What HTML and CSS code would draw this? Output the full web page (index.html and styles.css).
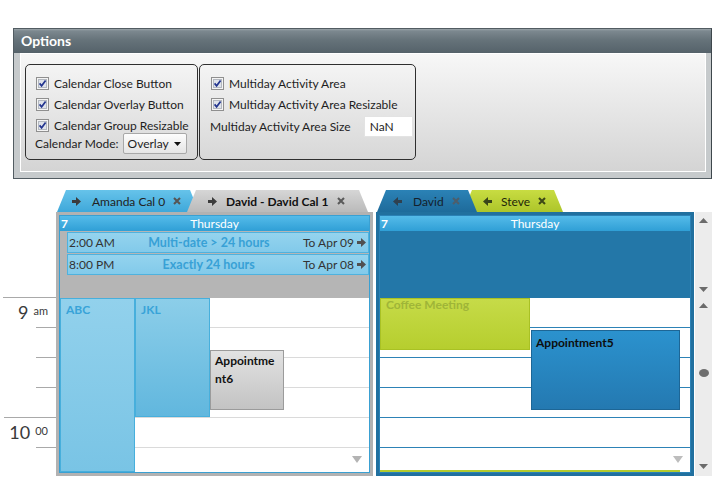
FILE: index.html
```html
<!DOCTYPE html>
<html>
<head>
<meta charset="utf-8">
<link rel="stylesheet" href="styles.css">
</head>
<body>
<div class="options">
  <div class="opt-head">Options</div>
  <div class="opt-body">
    <div class="opt-inner">
      <div class="group g1">
        <div class="row"><svg class="cb" viewBox="0 0 13 13"><rect x=".5" y=".5" width="12" height="12" fill="#f4f4f4" stroke="#8f8f8f"/><rect x="2.5" y="2.5" width="8" height="8" fill="#dfe3ea" stroke="#b3b8c0"/><path d="M3.6 6.4 5.6 8.8 9.6 3.4" fill="none" stroke="#23358f" stroke-width="1.7"/></svg>Calendar Close Button</div>
        <div class="row"><svg class="cb" viewBox="0 0 13 13"><rect x=".5" y=".5" width="12" height="12" fill="#f4f4f4" stroke="#8f8f8f"/><rect x="2.5" y="2.5" width="8" height="8" fill="#dfe3ea" stroke="#b3b8c0"/><path d="M3.6 6.4 5.6 8.8 9.6 3.4" fill="none" stroke="#23358f" stroke-width="1.7"/></svg>Calendar Overlay Button</div>
        <div class="row"><svg class="cb" viewBox="0 0 13 13"><rect x=".5" y=".5" width="12" height="12" fill="#f4f4f4" stroke="#8f8f8f"/><rect x="2.5" y="2.5" width="8" height="8" fill="#dfe3ea" stroke="#b3b8c0"/><path d="M3.6 6.4 5.6 8.8 9.6 3.4" fill="none" stroke="#23358f" stroke-width="1.7"/></svg>Calendar Group Resizable</div>
        <div class="row mode">Calendar Mode:<div class="select">Overlay<svg width="7" height="4" viewBox="0 0 7 4"><path d="M0 0H7L3.5 4Z" fill="#111"/></svg></div></div>
      </div>
      <div class="group g2">
        <div class="row"><svg class="cb" viewBox="0 0 13 13"><rect x=".5" y=".5" width="12" height="12" fill="#f4f4f4" stroke="#8f8f8f"/><rect x="2.5" y="2.5" width="8" height="8" fill="#dfe3ea" stroke="#b3b8c0"/><path d="M3.6 6.4 5.6 8.8 9.6 3.4" fill="none" stroke="#23358f" stroke-width="1.7"/></svg>Multiday Activity Area</div>
        <div class="row"><svg class="cb" viewBox="0 0 13 13"><rect x=".5" y=".5" width="12" height="12" fill="#f4f4f4" stroke="#8f8f8f"/><rect x="2.5" y="2.5" width="8" height="8" fill="#dfe3ea" stroke="#b3b8c0"/><path d="M3.6 6.4 5.6 8.8 9.6 3.4" fill="none" stroke="#23358f" stroke-width="1.7"/></svg>Multiday Activity Area Resizable</div>
        <div class="row size">Multiday Activity Area Size<div class="input">NaN</div></div>
      </div>
    </div>
  </div>
</div>

<div class="sched">
  <div class="gutter">
    <div class="hour">
      <div class="q"><div class="hlabel"><span class="hnum">9</span><span class="hsup">am</span></div></div>
      <div class="q"></div>
      <div class="q"></div>
      <div class="q last"></div>
    </div>
    <div class="hour h10">
      <div class="q"><div class="hlabel"><span class="hnum">10</span><span class="hsup">00</span></div></div>
      <div class="q"></div>
    </div>
  </div>

  <div class="calcol lcol">
    <div class="tabs">
      <div class="tab t-amanda">
        <svg class="arr" viewBox="0 0 9 9"><path d="M0 3H4V0L9 4.5 4 9V6H0Z" fill="#3c3c3c"/></svg>
        <span class="tl">Amanda Cal 0</span>
        <svg class="x" viewBox="0 0 8 8"><path d="M1 1 7 7M7 1 1 7" stroke="#555" stroke-width="2.1"/></svg>
      </div>
      <div class="tab t-david">
        <svg class="arr" viewBox="0 0 9 9"><path d="M0 3H4V0L9 4.5 4 9V6H0Z" fill="#3c3c3c"/></svg>
        <span class="tl b">David - David Cal 1</span>
        <svg class="x" viewBox="0 0 8 8"><path d="M1 1 7 7M7 1 1 7" stroke="#5a5a5a" stroke-width="2.1"/></svg>
      </div>
    </div>
    <div class="cal">
      <div class="cal-in">
        <div class="chead"><b class="dnum">7</b><span>Thursday</span><span></span></div>
        <div class="mday">
          <div class="bar"><span>2:00 AM</span><span class="mid">Multi-date &gt; 24 hours</span><span class="to">To Apr 09<svg class="arr" viewBox="0 0 9 9"><path d="M0 3H4V0L9 4.5 4 9V6H0Z" fill="#505050"/></svg></span></div>
          <div class="bar"><span>8:00 PM</span><span class="mid">Exactly 24 hours</span><span class="to">To Apr 08<svg class="arr" viewBox="0 0 9 9"><path d="M0 3H4V0L9 4.5 4 9V6H0Z" fill="#505050"/></svg></span></div>
        </div>
        <div class="tarea">
          <div class="slot"></div><div class="slot"></div><div class="slot"></div><div class="slot"></div><div class="slot"></div>
          <div class="ev abc">ABC</div>
          <div class="ev jkl">JKL</div>
          <div class="ev ap6">Appointment6</div>
          <svg class="more" viewBox="0 0 10 7"><path d="M0 0H10L5 7Z" fill="#b3b3b3"/></svg>
        </div>
      </div>
    </div>
  </div>

  <div class="calcol rcol">
    <div class="tabs">
      <div class="tab t-rdavid">
        <svg class="arr" viewBox="0 0 9 9"><path d="M9 3H5V0L0 4.5 5 9V6H9Z" fill="#2f4150"/></svg>
        <span class="tl">David</span>
        <svg class="x" viewBox="0 0 8 8"><path d="M1 1 7 7M7 1 1 7" stroke="#4d5e6b" stroke-width="2.1"/></svg>
      </div>
      <div class="tab t-steve">
        <svg class="arr" viewBox="0 0 9 9"><path d="M9 3H5V0L0 4.5 5 9V6H9Z" fill="#39441a"/></svg>
        <span class="tl">Steve</span>
        <svg class="x" viewBox="0 0 8 8"><path d="M1 1 7 7M7 1 1 7" stroke="#3d4816" stroke-width="2.1"/></svg>
      </div>
    </div>
    <div class="cal rcal">
      <div class="cal-in">
        <div class="chead"><b class="dnum">7</b><span>Thursday</span><span></span></div>
        <div class="mday rm"></div>
        <div class="tarea">
          <div class="slot"></div><div class="slot"></div><div class="slot"></div><div class="slot"></div><div class="slot"></div>
          <div class="ev coffee"><div class="ctext">Coffee Meeting</div></div>
          <div class="ev ap5">Appointment5</div>
          <div class="ev gline"></div>
          <svg class="more" viewBox="0 0 10 7"><path d="M0 0H10L5 7Z" fill="#bdbdbd"/></svg>
        </div>
      </div>
    </div>
  </div>

  <div class="scroll">
    <div class="sb top">
      <svg viewBox="0 0 9 5"><path d="M0 5 4.5 0 9 5Z" fill="#6b6b6b"/></svg>
      <svg viewBox="0 0 9 5"><path d="M0 0H9L4.5 5Z" fill="#6b6b6b"/></svg>
    </div>
    <div class="sb bot">
      <svg viewBox="0 0 9 5"><path d="M0 5 4.5 0 9 5Z" fill="#6b6b6b"/></svg>
      <span class="thumb"></span>
      <svg class="dn" viewBox="0 0 9 5"><path d="M0 0H9L4.5 5Z" fill="#6b6b6b"/></svg>
    </div>
  </div>
</div>
</body>
</html>
```

FILE: styles.css
```css
* { box-sizing: border-box; }
body { margin: 0; font-family: Lato, "Open Sans", sans-serif; font-size: 12px; color: #222; background: #fff; }

/* options panel */
.options { margin: 28px 0 0 13px; width: 699px; height: 151px; border: 1px solid #525c62; border-right-color: #3e474c; background: #c6cacc; display: flex; flex-direction: column; }
.opt-head { height: 24px; flex: none; background: linear-gradient(#9aa4a9 0, #7c888f 2px, #66737a 45%, #55626a 100%); color: #fff; font-weight: 700; font-size: 14px; line-height: 24px; padding-left: 7px; }
.opt-body { flex: 1; padding: 0 5px 6px 6px; }
.opt-inner { height: 100%; border: 1px solid #fff; background: linear-gradient(#f7f7f7, #d4d4d4); padding: 10px 0 0 4px; display: flex; align-items: flex-start; }
.group { height: 96px; border: 1px solid #2f2f2f; border-radius: 5px; padding-top: 8px; }
.g1 { width: 173px; padding-left: 10px; }
.g2 { width: 217px; margin-left: 1px; padding-left: 11px; }
.row { height: 21px; display: flex; align-items: center; white-space: nowrap; color: #1e1e1e; }
.cb { width: 13px; height: 13px; margin-right: 5px; flex: none; display: block; }
.mode { margin-top: -3px; margin-left: -1px; }
.select { margin-left: 4px; width: 64px; height: 21px; border: 1px solid #a8a8a8; border-radius: 2px; background: linear-gradient(#fdfdfd, #e5e5e5); display: flex; align-items: center; padding-left: 4px; }
.select svg { margin-left: auto; margin-right: 5px; }
.size { margin-top: 1px; margin-left: -1px; }
.input { margin-left: 13px; width: 49px; height: 21px; background: #fff; border: 1px solid #e3e3e3; padding-left: 5px; line-height: 19px; }

/* scheduler */
.sched { display: flex; margin-top: 11px; height: 286px; overflow: hidden; }
.gutter { width: 56px; flex: none; padding-top: 107px; color: #3a3a3a; }
.hour { margin-left: 3px; border-top: 1px solid #a9a9a9; height: 120px; }
.h10 { margin-left: 4px; height: auto; }
.q { height: 30px; background: linear-gradient(#a9a9a9, #a9a9a9) right bottom / 20px 1px no-repeat; }
.q.last { height: 29px; background: none; }
.hlabel { display: flex; justify-content: flex-end; align-items: flex-start; padding-right: 8px; padding-top: 3px; }
.hnum { font-size: 18px; line-height: 22px; }
.hsup { font-size: 11px; line-height: 13px; margin-left: 5px; margin-top: 3px; }

.calcol { display: flex; flex-direction: column; flex: none; }
.lcol { width: 317px; }
.rcol { width: 318px; margin-left: 3px; }
.tabs { height: 22px; display: flex; flex: none; }
.tab { height: 22px; display: flex; align-items: center; white-space: nowrap; position: relative; clip-path: polygon(9px 0, calc(100% - 9px) 0, 100% 100%, 0 100%); }
.tab .arr { width: 9px; height: 9px; flex: none; }
.tab .x { width: 8px; height: 8px; flex: none; }
.tl { color: #222; }
.tl.b { font-weight: 700; color: #111; }
.t-amanda { width: 142px; margin-left: 1px; padding-left: 15px; background: linear-gradient(#66c3ea, #3fa8da); }
.t-amanda .tl { margin-left: 11px; }
.t-amanda .x { margin-left: 8px; }
.t-david { width: 181px; margin-left: -12px; padding-left: 21px; background: linear-gradient(#d6d6d6, #bababa); }
.t-david .tl { margin-left: 9px; }
.t-david .x { margin-left: 9px; }
.t-rdavid { width: 100px; margin-left: 1px; padding-left: 16px; background: linear-gradient(#2b82b6, #1e6b9b); z-index: 2; }
.t-rdavid .tl { margin-left: 11px; color: #14212c; }
.t-rdavid .x { margin-left: 8px; }
.t-steve { width: 100px; margin-left: -14px; padding-left: 20px; background: linear-gradient(#c8dc42, #adc52a); z-index: 1; }
.t-steve .tl { margin-left: 9px; color: #1f260a; }
.t-steve .x { margin-left: 8px; }

.cal { height: 264px; border: 3px solid #b2b2b2; }
.rcal { border-color: #21709f; }
.cal-in { height: 100%; border: 1px solid #3aa0d2; display: flex; flex-direction: column; }
.rcal .cal-in { border-color: #2a81b6; }
.chead { height: 15px; flex: none; background: linear-gradient(#55bbe9, #2f9fd6); color: #fff; line-height: 15px; display: grid; grid-template-columns: 1fr auto 1fr; }
.dnum { padding-left: 1px; }
.mday { height: 67px; flex: none; background: #b5b5b5; padding: 1px 0 0 7px; }
.mday.rm { background: #2377a8; padding: 0; }
.bar { height: 21px; margin-bottom: 1px; border: 1px solid #4fb2de; background: linear-gradient(#94d3ee, #82caea); display: flex; align-items: center; padding: 0 2px 0 1px; color: #333; white-space: nowrap; }
.bar .mid { flex: 1; text-align: center; font-weight: 700; color: #38a1d6; font-size: 12.5px; }
.bar .to { display: flex; align-items: center; }
.bar .to .arr { width: 9px; height: 9px; margin-left: 3px; }

.tarea { flex: 1; position: relative; overflow: hidden; background: #fff; }
.slot { height: 30px; border-bottom: 1px solid #dadada; }
.rcal .slot { border-bottom-color: #2d82b6; }
.ev { position: absolute; font-weight: 700; overflow: hidden; border: 1px solid; }
.abc, .jkl { color: #38a3d8; padding: 3px 5px; line-height: 15px; border-color: #47afdc; }
.abc { left: 0; top: 0; width: 75px; height: 174px; background: linear-gradient(#92d1ec, #79c4e5); }
.jkl { left: 75px; top: 0; width: 75px; height: 119px; background: linear-gradient(#8ccee9, #61b7de); }
.ap6 { left: 150px; top: 52px; width: 74px; height: 60px; padding: 1px 2px 0 4px; line-height: 18px; color: #111; word-break: break-all; border-color: #9b9b9b; background: linear-gradient(#e2e2e2, #c3c3c3); }
.coffee { left: 0; top: 0; width: 150px; height: 52px; border-color: #a9c124; background: linear-gradient(#c6db48, #b6ce2e); padding: 0 5px; line-height: 15px; color: #9fb538; }
.ctext { margin-top: -2px; }
.ap5 { left: 151px; top: 32px; width: 149px; height: 80px; border-color: #1d6696; background: linear-gradient(#2b92ce, #2479b1); padding: 4px 4px; line-height: 15px; color: #0d0d0d; }
.gline { left: 0; top: 172px; width: 300px; height: 6px; border: none; background: #b4cb2e; }
.more { position: absolute; right: 7px; bottom: 9px; width: 10px; height: 7px; }

.scroll { width: 17px; margin-left: 1px; flex: none; padding-top: 22px; display: flex; flex-direction: column; }
.sb { background: #ececec; display: flex; flex-direction: column; align-items: center; }
.sb svg { width: 9px; height: 5px; display: block; }
.sb.top { height: 86px; justify-content: space-between; padding: 6px 0; }
.sb.bot { height: 178px; padding-top: 5px; }
.thumb { width: 10px; height: 8px; border-radius: 50%; background: #6e6e6e; margin-top: 61px; }
.sb .dn { margin-top: auto; margin-bottom: 7px; }
```
